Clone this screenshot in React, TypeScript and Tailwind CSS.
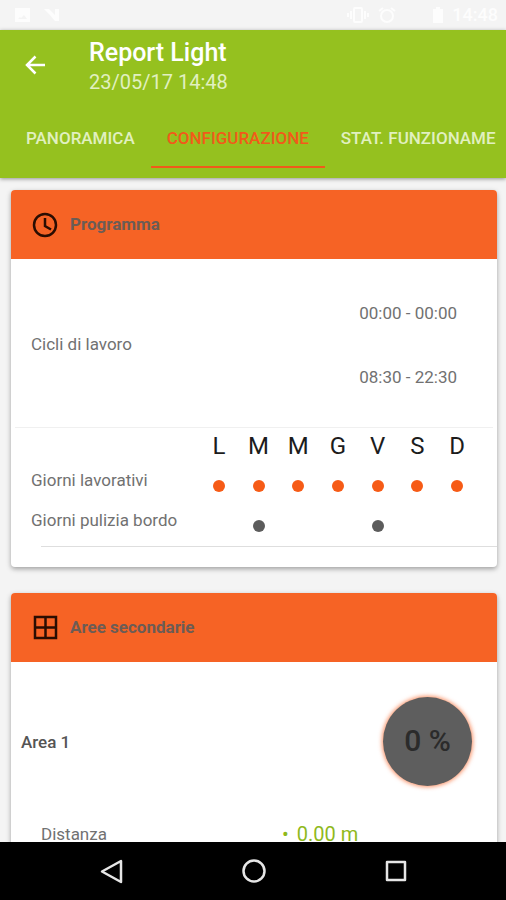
import type { ReactNode } from "react";

const days = ["L", "M", "M", "G", "V", "S", "D"];

const schedule = [
  { label: "Giorni lavorativi", active: [0, 1, 2, 3, 4, 5, 6], dot: "bg-[#f65b16]" },
  { label: "Giorni pulizia bordo", active: [1, 4], dot: "bg-[#5c5c5c]" },
];

function StatusBar() {
  return (
    <div className="flex h-[30px] shrink-0 items-center bg-[#f4f4f4] pr-2 pl-3 text-[#fdfdfd]">
      <svg width="22" height="18" viewBox="0 0 22 18" fill="currentColor" aria-hidden="true">
        <path d="M3 2h15v14H3zM6 13h9l-3-4-3 3-1-1z" fillRule="evenodd" />
      </svg>
      <svg className="ml-2" width="20" height="18" viewBox="0 0 20 18" fill="currentColor" aria-hidden="true">
        <path d="M2 3h5l6 6V3h4v12h-4L7 8z" />
      </svg>
      <div className="ml-auto flex items-center gap-2">
        <svg width="24" height="18" viewBox="0 0 24 18" fill="none" stroke="currentColor" strokeWidth="2" aria-hidden="true">
          <rect x="8" y="2" width="8" height="14" rx="1" />
          <path d="M5 5v8M19 5v8M2 7v4M22 7v4" />
        </svg>
        <svg width="18" height="18" viewBox="0 0 18 18" fill="none" stroke="currentColor" strokeWidth="2" aria-hidden="true">
          <circle cx="9" cy="10" r="6" />
          <path d="M1 5l4-3M17 5l-4-3" />
        </svg>
        <svg className="ml-7" width="12" height="18" viewBox="0 0 12 18" fill="currentColor" aria-hidden="true">
          <path d="M4 1h4v2h3v14H1V3h3z" />
        </svg>
        <span className="text-lg leading-none font-medium">14:48</span>
      </div>
    </div>
  );
}

function Header() {
  return (
    <header className="relative z-10 shrink-0 bg-[#95c11f] shadow-[0_1px_4px_rgba(0,0,0,0.4)]">
      <div className="flex h-[70px]">
        <button type="button" aria-label="Indietro" className="flex w-[89px] shrink-0 items-center pl-6 text-white">
          <svg width="22" height="22" viewBox="0 0 22 22" fill="none" stroke="currentColor" strokeWidth="2.5" aria-hidden="true">
            <path d="M21 11H3M11.500 2.500L3 11l8.500 8.500" />
          </svg>
        </button>
        <div className="pt-2">
          <h1 className="text-[25px]/[29px] font-medium text-white">Report Light</h1>
          <p className="text-xl/[30px] text-[#e1f0c0]">23/05/17 14:48</p>
        </div>
      </div>
      <nav className="flex h-[78px] overflow-hidden pb-[10px] pl-[10px] text-[17px] font-medium whitespace-nowrap text-[#e1f0c0]">
        <button type="button" className="shrink-0 border-b-2 border-transparent px-4 pt-3">PANORAMICA</button>
        <button type="button" aria-current="page" className="shrink-0 border-b-2 border-[#f15a1a] px-4 pt-3 text-[#f15a1a]">
          CONFIGURAZIONE
        </button>
        <button type="button" className="shrink-0 border-b-2 border-transparent pt-3 pl-4">STAT. FUNZIONAME</button>
      </nav>
    </header>
  );
}

function Card({ title, icon, children }: { title: string; icon: ReactNode; children: ReactNode }) {
  return (
    <section className="overflow-hidden rounded bg-white shadow-[0_2px_5px_rgba(0,0,0,0.35)]">
      <div className="flex h-[69px] items-center gap-3 bg-[#f66325] pl-[21px]">
        <span className="text-[#2a0d02]">{icon}</span>
        <h2 className="text-[17px] font-bold text-[#6b5c55]">{title}</h2>
      </div>
      {children}
    </section>
  );
}

function ClockIcon() {
  return (
    <svg width="26" height="26" viewBox="0 0 26 26" fill="none" stroke="currentColor" strokeWidth="2.5" aria-hidden="true">
      <circle cx="13" cy="13" r="11" />
      <path d="M13 6v8l6 3.500" />
    </svg>
  );
}

function GridIcon() {
  return (
    <svg width="26" height="26" viewBox="0 0 26 26" fill="none" stroke="currentColor" strokeWidth="2.500" aria-hidden="true">
      <path d="M3 2h21v21H3zM13.500 2v21M3 12.500h21" />
    </svg>
  );
}

function NavigationBar() {
  return (
    <nav className="flex h-[58px] shrink-0 items-center justify-center gap-[118px] bg-black pl-[2px] text-[#e6e6e6]">
      <button type="button" aria-label="Indietro">
        <svg width="24" height="26" viewBox="0 0 24 26" fill="none" stroke="currentColor" strokeWidth="2.500" strokeLinejoin="round" aria-hidden="true">
          <path d="M21 3v21L2 13.500z" />
        </svg>
      </button>
      <button type="button" aria-label="Home">
        <svg width="24" height="26" viewBox="0 0 24 26" fill="none" stroke="currentColor" strokeWidth="2.500" aria-hidden="true">
          <circle cx="12" cy="13" r="10.500" />
        </svg>
      </button>
      <button type="button" aria-label="Recenti">
        <svg width="24" height="26" viewBox="0 0 24 26" fill="none" stroke="currentColor" strokeWidth="2.500" strokeLinejoin="round" aria-hidden="true">
          <rect x="3" y="4" width="18" height="18" />
        </svg>
      </button>
    </nav>
  );
}

export default function App() {
  return (
    <div className="flex h-screen flex-col overflow-hidden bg-[#f4f4f4] font-[Roboto,sans-serif] text-[17px] text-[#717171]">
      <StatusBar />
      <Header />
      <main className="flex min-h-0 flex-1 flex-col gap-[26px] overflow-hidden pt-3 pr-[9px] pl-[11px] *:shrink-0">
        <Card title="Programma" icon={<ClockIcon />}>
          <div className="mx-1 flex h-[169px] items-center justify-between border-b border-[#f0f0f0] pt-[3px] pr-9 pl-4">
            <span>Cicli di lavoro</span>
            <ul className="leading-6">
              <li className="mb-10">00:00 - 00:00</li>
              <li>08:30 - 22:30</li>
            </ul>
          </div>
          <div className="px-5">
            <table className="w-full table-fixed border-collapse">
              <thead>
                <tr className="h-[38px] text-2xl/[36px] text-[#1c1c1c]">
                  <td className="w-[168px]" />
                  {days.map((day, i) => (
                    <th key={i} scope="col" className="align-top font-normal">{day}</th>
                  ))}
                </tr>
              </thead>
              <tbody>
                {schedule.map((row) => (
                  <tr key={row.label} className="h-10">
                    <th scope="row" className="pt-[2px] text-left align-top leading-6 font-normal whitespace-nowrap">{row.label}</th>
                    {days.map((_, i) => (
                      <td key={i}>
                        {row.active.includes(i) && <span className={`mx-auto block size-3 rounded-full ${row.dot}`} />}
                      </td>
                    ))}
                  </tr>
                ))}
              </tbody>
            </table>
          </div>
          <div className="mb-5 ml-[30px] border-t border-[#dedede]" />
        </Card>

        <Card title="Aree secondarie" icon={<GridIcon />}>
          <div className="flex h-[158px] items-center justify-between pr-[25px] pl-[10px]">
            <h3 className="pt-1 font-medium text-[#555555]">Area 1</h3>
            <div className="flex size-[89px] items-center justify-center rounded-full bg-[#5e5e5e] text-3xl font-medium text-[#2b2b2b] shadow-[0_0_4px_1px_rgba(246,99,37,0.7)]">
              0 %
            </div>
          </div>
          <dl className="flex h-10 pl-[30px] leading-7">
            <dt className="w-[241px]">Distanza</dt>
            <dd className="flex gap-2 text-xl/[28px] text-[#8fb91c]">
              <span aria-hidden="true">•</span>
              0.00 m
            </dd>
          </dl>
        </Card>
      </main>
      <NavigationBar />
    </div>
  );
}
